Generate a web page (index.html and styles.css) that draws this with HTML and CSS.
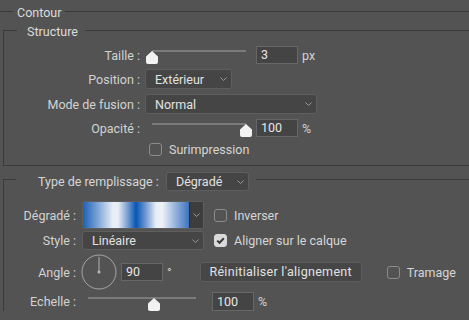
FILE: index.html
```html
<!DOCTYPE html>
<html lang="fr">
<head>
<meta charset="utf-8">
<title>Contour</title>
<link rel="stylesheet" href="styles.css">
</head>
<body>
<fieldset class="panel">
  <legend class="panel-title">Contour</legend>

  <fieldset class="group structure">
    <legend class="group-title">Structure</legend>

    <div class="row">
      <span class="lbl">Taille :</span>
      <div class="slider"><div class="track"></div><span class="thumb" style="left: 0%"><svg width="12" height="13" viewBox="0 0 12 13"><path d="M6 0 L12 5.5 V11 Q12 13 10 13 H2 Q0 13 0 11 V5.5 Z" fill="#f2f2f2"/></svg></span></div>
      <div class="num num-gap">3</div>
      <span class="unit">px</span>
    </div>

    <div class="row">
      <span class="lbl">Position :</span>
      <div class="select sel-position">Extérieur<svg class="chev" width="7" height="4" viewBox="0 0 7 4"><path d="M0.5 0.5 L3.5 3.5 L6.5 0.5" fill="none" stroke="#9a9a9a"/></svg></div>
    </div>

    <div class="row row-mode">
      <span class="lbl">Mode de fusion :</span>
      <div class="select sel-mode">Normal<svg class="chev" width="7" height="4" viewBox="0 0 7 4"><path d="M0.5 0.5 L3.5 3.5 L6.5 0.5" fill="none" stroke="#9a9a9a"/></svg></div>
    </div>

    <div class="row">
      <span class="lbl">Opacité :</span>
      <div class="slider"><div class="track"></div><span class="thumb" style="left: 100%"><svg width="12" height="13" viewBox="0 0 12 13"><path d="M6 0 L12 5.5 V11 Q12 13 10 13 H2 Q0 13 0 11 V5.5 Z" fill="#f2f2f2"/></svg></span></div>
      <div class="num num-gap">100</div>
      <span class="unit">%</span>
    </div>

    <div class="row row-short">
      <span class="lbl"></span>
      <span class="check check-gap"></span>
      <span class="check-text">Surimpression</span>
    </div>
  </fieldset>

  <fieldset class="group fill">
    <legend class="fill-title">
      <span class="fill-label">Type de remplissage :</span>
      <div class="select sel-fill">Dégradé<svg class="chev" width="7" height="4" viewBox="0 0 7 4"><path d="M0.5 0.5 L3.5 3.5 L6.5 0.5" fill="none" stroke="#9a9a9a"/></svg></div>
    </legend>

    <div class="row row-grad">
      <span class="lbl lbl-fill">Dégradé :</span>
      <div class="swatch">
        <div class="grad"></div>
        <div class="drop"><svg width="7" height="4" viewBox="0 0 7 4"><path d="M0.5 0.5 L3.5 3.5 L6.5 0.5" fill="none" stroke="#9a9a9a"/></svg></div>
      </div>
      <span class="check check-side"></span>
      <span class="check-text">Inverser</span>
    </div>

    <div class="row row-style">
      <span class="lbl lbl-fill">Style :</span>
      <div class="select sel-style">Linéaire<svg class="chev" width="7" height="4" viewBox="0 0 7 4"><path d="M0.5 0.5 L3.5 3.5 L6.5 0.5" fill="none" stroke="#9a9a9a"/></svg></div>
      <span class="check check-side checked"><svg width="11" height="11" viewBox="0 0 11 11"><path d="M2.2 5.6 L4.5 7.8 L8.8 3.2" fill="none" stroke="#3a3a3a" stroke-width="2"/></svg></span>
      <span class="check-text">Aligner sur le calque</span>
    </div>

    <div class="row row-angle">
      <span class="lbl lbl-fill">Angle :</span>
      <svg class="dial" width="36" height="36" viewBox="0 0 36 36">
        <circle cx="18" cy="18" r="17" fill="none" stroke="#a6a6a6"/>
        <line x1="18" y1="18" x2="18" y2="3" stroke="#b4b4b4"/>
        <circle cx="18" cy="18" r="1.6" fill="#b4b4b4"/>
      </svg>
      <div class="num num-angle">90</div>
      <span class="unit">°</span>
      <div class="btn">Réinitialiser l'alignement</div>
      <span class="check check-tram"></span>
      <span class="check-text">Tramage</span>
    </div>

    <div class="row row-scale">
      <span class="lbl lbl-fill">Echelle :</span>
      <div class="slider slider-scale"><div class="track"></div><span class="thumb" style="left: 61%"><svg width="12" height="13" viewBox="0 0 12 13"><path d="M6 0 L12 5.5 V11 Q12 13 10 13 H2 Q0 13 0 11 V5.5 Z" fill="#f2f2f2"/></svg></span></div>
      <div class="num num-scale">100</div>
      <span class="unit">%</span>
    </div>
  </fieldset>
</fieldset>
</body>
</html>
```
FILE: styles.css
```css
html, body { height: 100%; }
body { margin: 0; background: #535353; color: #d2d2d2; font: 12.5px Roboto, "Liberation Sans", sans-serif; overflow: hidden; }

/* fieldsets: lines drawn by the borders, titles sit on them */
fieldset { margin: 0; padding: 0; min-width: 0; border: 0; }
legend { padding: 0; }
.panel { margin-top: 3px; border-top: 1px solid #3a3a3a; }
.panel-title { height: 16px; margin-left: 13px; padding: 0 4px; line-height: 19px; color: #dcdcdc; }
.group { margin-left: 3px; border-top: 1px solid #3a3a3a; border-left: 1px solid #3a3a3a; }
.group-title { height: 16px; margin-left: 13px; padding: 0 7px 0 10px; line-height: 19px; color: #dcdcdc; }
.structure { margin-top: 3px; padding: 5px 0 7px; border-bottom: 1px solid #3a3a3a; }
.fill { margin-top: 6px; padding-top: 14px; }
.fill-title { display: flex; align-items: flex-start; height: 15px; margin-left: 12px; padding: 0 7px 0 22px; }
.fill-label { width: 122px; line-height: 19px; color: #d6d6d6; }

/* rows */
.row { display: flex; align-items: center; height: 24px; }
.row-mode { margin-top: 1px; }
.row-short { height: 18px; }
.row-grad { height: 28px; }
.row-style { height: 19px; margin-top: 2px; }
.row-angle { height: 36px; margin-top: 4px; }
.row-scale { height: 19px; margin-top: 2px; }
.lbl { width: 136px; flex: none; text-align: right; }
.lbl-fill { width: 72px; }

/* slider */
.slider { position: relative; flex: none; width: 94px; height: 14px; margin: 4px 0 0 12px; }
.slider-scale { width: 108px; }
.track { height: 2px; background: #7b7b7b; }
.thumb { position: absolute; top: 1px; width: 12px; height: 13px; margin-left: -6px; }
.thumb svg { display: block; }

/* number fields */
.num { box-sizing: border-box; flex: none; width: 42px; height: 18px; padding-left: 4px; line-height: 16px; background: #444; border: 1px solid #676767; color: #e6e6e6; }
.num-gap { margin-left: 10px; }
.num-angle { margin-left: 4px; }
.num-scale { height: 19px; margin-left: 16px; line-height: 17px; }
.unit { margin-left: 4px; color: #d2d2d2; }

/* dropdowns */
.select { box-sizing: border-box; display: flex; align-items: center; flex: none; height: 20px; padding-left: 9px; background: #454545; border: 1px solid #5e5e5e; border-radius: 3px; color: #e2e2e2; }
.select .chev { margin-left: auto; margin-right: 4px; }
.sel-position { width: 87px; margin-left: 5px; }
.sel-mode { width: 172px; margin-left: 5px; }
.sel-fill { width: 83px; height: 19px; margin-left: 6px; }
.sel-style { width: 122px; height: 19px; margin-left: 6px; }

/* gradient swatch */
.swatch { box-sizing: border-box; display: flex; flex: none; width: 122px; height: 28px; margin-left: 6px; border: 1px solid #5e5e5e; border-radius: 2px; }
.grad { flex: 1; background: linear-gradient(90deg, #1a61b6 0%, #7ea3d6 14%, #e7edf6 28%, #e9eef7 33%, #7a9fd2 42%, #0656b4 50%, #6f97cf 59%, #e9eef6 69%, #edf1f8 75%, #8eaedb 88%, #3e74bd 100%); }
.drop { display: flex; align-items: center; justify-content: center; width: 13px; background: #3d3d3d; border-left: 1px solid #2e2e2e; }

/* checkboxes */
.check { box-sizing: border-box; flex: none; width: 13px; height: 13px; border: 1px solid #8c8c8c; border-radius: 3px; }
.check.checked { display: flex; align-items: center; justify-content: center; background: #dadada; border-color: #dadada; }
.check-gap { margin-left: 9px; }
.check-side { margin-left: 10px; }
.check-tram { margin-left: 25px; }
.check-text { margin-left: 7px; color: #d6d6d6; }

/* angle */
.dial { flex: none; margin-left: 5px; }
.btn { box-sizing: border-box; flex: none; width: 162px; height: 20px; margin-left: 28px; line-height: 18px; text-align: center; letter-spacing: 0.3px; background: #464646; border: 1px solid #5c5c5c; border-radius: 3px; color: #e2e2e2; }
```
